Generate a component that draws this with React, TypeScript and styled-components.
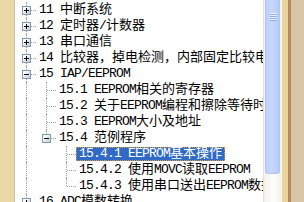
import React from 'react'
import styled, { createGlobalStyle } from 'styled-components'

const Global = createGlobalStyle`
body {
  margin: 0;
  overflow: hidden;
  background: #fff;
}
`

const Frame = styled.div`
display: flex;
flex-flow: row nowrap;
width: 304px;
height: 202px;
overflow: hidden;
`

const Sidebar = styled.div`
width: 14px;
flex: none;
background: #ead8a6;
border-right: 1px solid #c9c3b1;
`

const Pane = styled.div`
flex: 1;
min-width: 0;
background: #fff;
overflow: hidden;
padding: 2px 0 0 1px;
font-family: "Liberation Mono", "Noto Sans CJK SC", monospace;
font-size: 13px;
color: #000;
`

const Row = styled.div`
display: flex;
flex-flow: row nowrap;
align-items: center;
height: 16px;
white-space: nowrap;
`

const Guide = styled.div<{ $line: boolean }>`
position: relative;
flex: none;
width: 20px;
height: 16px;
&::before {
  content: '';
  display: ${p => (p.$line ? 'block' : 'none')};
  position: absolute;
  left: 10px;
  top: 0;
  bottom: 0;
  border-left: 1px dotted #a0a0a0;
}
`

const Joint = styled.div<{ $last: boolean }>`
position: relative;
flex: none;
width: 20px;
height: 16px;
&::before {
  content: '';
  position: absolute;
  left: 10px;
  top: 0;
  height: ${p => (p.$last ? '8px' : '16px')};
  border-left: 1px dotted #a0a0a0;
}
&::after {
  content: '';
  position: absolute;
  left: 11px;
  right: 0;
  top: 8px;
  border-top: 1px dotted #a0a0a0;
}
`

const Expander = styled.div<{ $open: boolean }>`
position: absolute;
z-index: 1;
left: 6px;
top: 4px;
width: 9px;
height: 9px;
box-sizing: border-box;
border: 1px solid #7f9db9;
background: linear-gradient(135deg, #ffffff 20%, #dfe3e6 60%, #c1ccd6 100%);
&::before {
  content: '';
  position: absolute;
  left: 1px;
  top: 3px;
  width: 5px;
  height: 1px;
  background: #000;
}
&::after {
  content: '';
  display: ${p => (p.$open ? 'none' : 'block')};
  position: absolute;
  left: 3px;
  top: 1px;
  width: 1px;
  height: 5px;
  background: #000;
}
`

const Label = styled.div<{ $selected?: boolean }>`
box-sizing: border-box;
height: 14px;
line-height: 12px;
padding: 0 2px 0 2px;
border: 1px dotted ${p => (p.$selected ? '#d6a040' : 'transparent')};
background: ${p => (p.$selected ? '#316ac5' : 'transparent')};
color: ${p => (p.$selected ? '#fff' : '#000')};
`

const Latin = styled.span`
letter-spacing: -0.8px;
`

const Scrollbar = styled.div`
flex: none;
width: 17px;
border-left: 1px solid #e2e0d8;
background: linear-gradient(90deg, #f3f2ec, #fdfdfa 60%, #f1f0ea);
`

const Thumb = styled.div`
position: relative;
box-sizing: border-box;
width: 15px;
height: 174px;
margin-left: 1px;
border: 1px solid #b3c6f3;
border-top: none;
border-radius: 0 0 3px 3px;
background: linear-gradient(90deg, #bccffb, #c8d7fd 40%, #b7cbfa);
`

const Grip = styled.div`
position: absolute;
left: 4px;
top: 13px;
width: 7px;
height: 8px;
background: repeating-linear-gradient(180deg, #eef3ff 0 1px, #8eaef0 1px 2px);
`

const Edge = styled.div`
flex: none;
width: 23px;
background: linear-gradient(90deg, #f9f6ee 0 1px, #e9d49e 1px 7px, #b48b5c 7px 10px, #d7c5a6 10px);
`

type Item = {
  title: string
  kids?: Item[]
  folded?: boolean
  selected?: boolean
}

const tree: Item[] = [
  { title: '11 中断系统', folded: true },
  { title: '12 定时器/计数器', folded: true },
  { title: '13 串口通信', folded: true },
  { title: '14 比较器，掉电检测，内部固定比较电压', folded: true },
  {
    title: '15 IAP/EEPROM',
    kids: [
      { title: '15.1 EEPROM相关的寄存器' },
      { title: '15.2 关于EEPROM编程和擦除等待时间' },
      { title: '15.3 EEPROM大小及地址' },
      {
        title: '15.4 范例程序',
        kids: [
          { title: '15.4.1 EEPROM基本操作', selected: true },
          { title: '15.4.2 使用MOVC读取EEPROM' },
          { title: '15.4.3 使用串口送出EEPROM数据' },
        ],
      },
    ],
  },
  { title: '16 ADC模数转换', folded: true },
]

const runs = (text: string) =>
  text
    .split(/([\x20-\x7e]+)/)
    .filter(Boolean)
    .map((s, i) => (/^[\x20-\x7e]+$/.test(s) ? <Latin key={i}>{s}</Latin> : <span key={i}>{s}</span>))

// flatten the tree into rows, keeping which ancestor columns still need a line
function rows(items: Item[], guides: boolean[], more: boolean): React.ReactNode[] {
  const out: React.ReactNode[] = []
  items.forEach((item, i) => {
    const last = i === items.length - 1 && !more
    const open = !!item.kids
    out.push(
      <Row key={item.title}>
        {guides.map((g, j) => (
          <Guide key={j} $line={g} />
        ))}
        <Joint $last={last}>{(open || item.folded) && <Expander $open={open} />}</Joint>
        <Label $selected={item.selected}>{runs(item.title)}</Label>
      </Row>
    )
    if (item.kids) out.push(...rows(item.kids, [...guides, !last], false))
  })
  return out
}

export default function App() {
  return (
    <>
      <Global />
      <Frame>
        <Sidebar />
        <Pane>{rows(tree, [], true)}</Pane>
        <Scrollbar>
          <Thumb>
            <Grip />
          </Thumb>
        </Scrollbar>
        <Edge />
      </Frame>
    </>
  )
}
